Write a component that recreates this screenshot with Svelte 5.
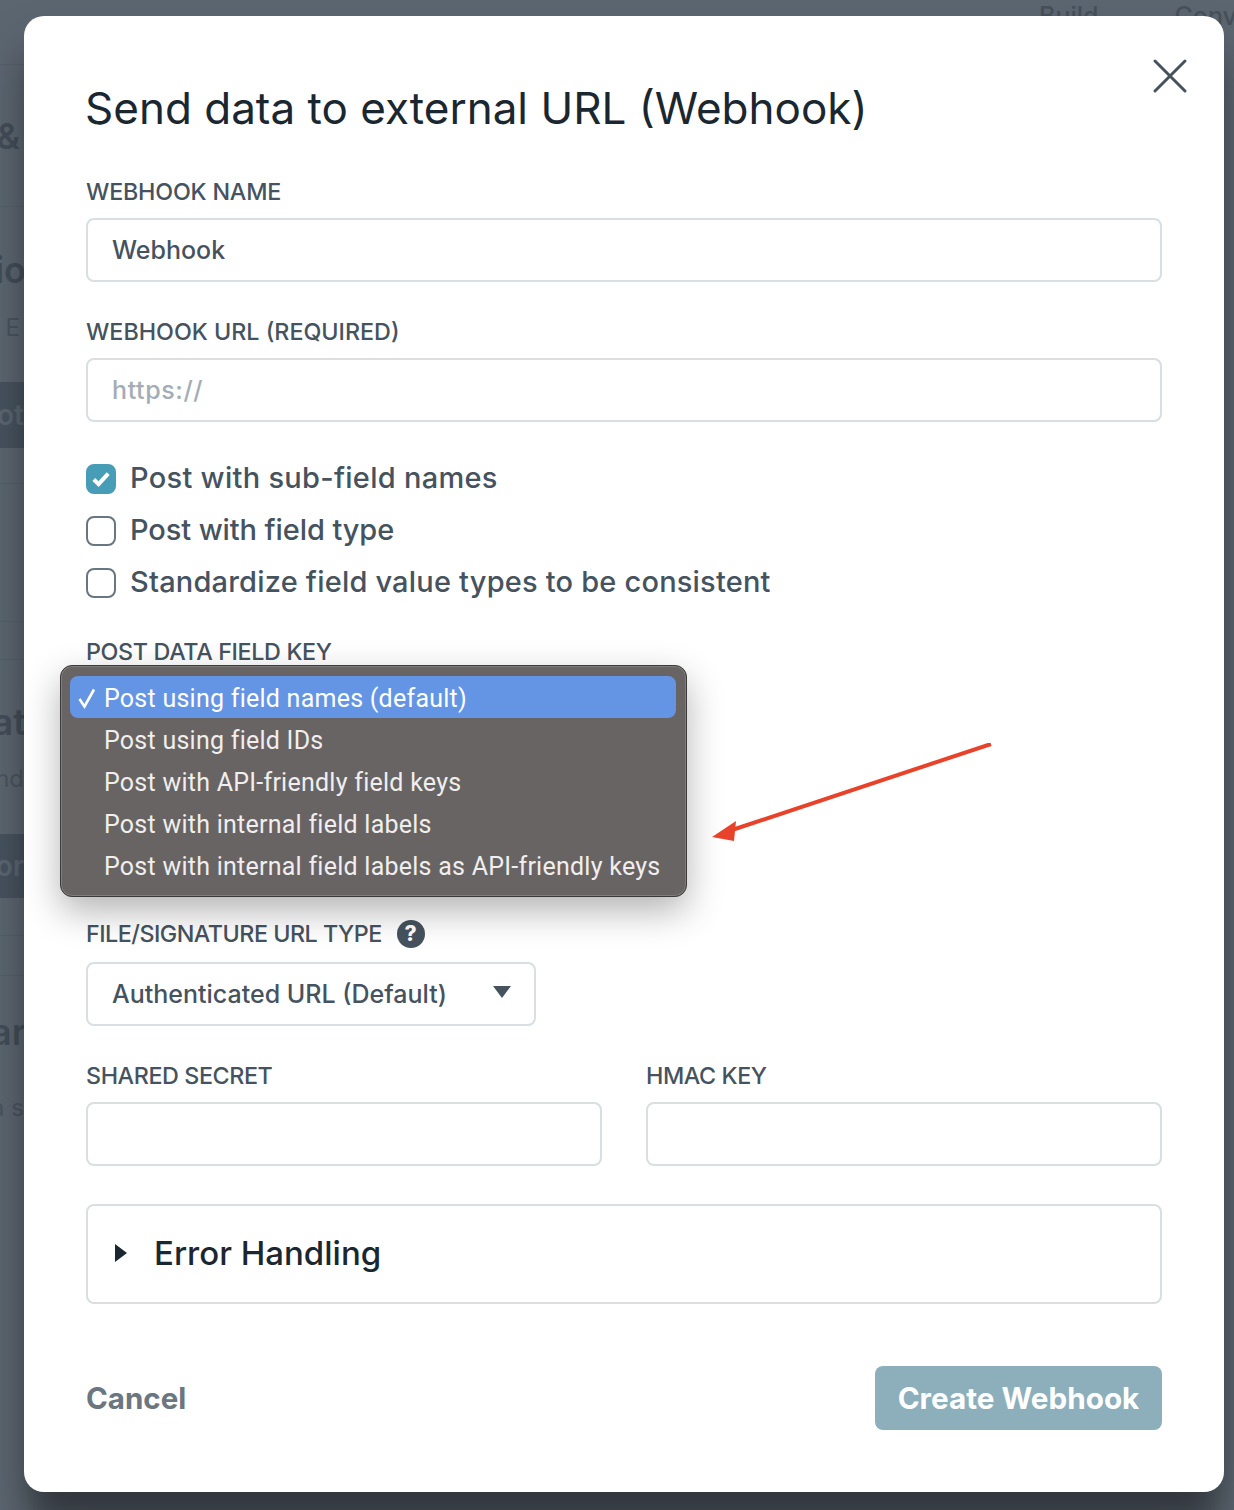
<script>
  const options = [
    'Post using field names (default)',
    'Post using field IDs',
    'Post with API-friendly field keys',
    'Post with internal field labels',
    'Post with internal field labels as API-friendly keys'
  ];
  const backdropRows = [
    { h: 65, text: '', cls: 'line' },
    { h: 142, text: '&', cls: 'big line inset' },
    { h: 33, text: '', cls: '' },
    { h: 60, text: 'io', cls: 'big' },
    { h: 54, text: 'E', cls: 'small inset' },
    { h: 28, text: '', cls: '' },
    { h: 66, text: 'ot', cls: 'band' },
    { h: 36, text: '', cls: 'line' },
    { h: 138, text: '', cls: 'line' },
    { h: 38, text: '', cls: 'line' },
    { h: 32, text: '', cls: '' },
    { h: 60, text: 'at', cls: 'big' },
    { h: 52, text: 'nd', cls: 'small' },
    { h: 30, text: '', cls: '' },
    { h: 64, text: 'or', cls: 'band' },
    { h: 38, text: '', cls: 'line' },
    { h: 40, text: '', cls: 'line' },
    { h: 26, text: '', cls: '' },
    { h: 60, text: 'ar', cls: 'big' },
    { h: 18, text: '', cls: '' },
    { h: 54, text: 'a s', cls: 'small' }
  ];
</script>

<div class="page">
  <div class="backdrop">
    <div class="rows">
      {#each backdropRows as r}
        <div class="row {r.cls}" style="height:{r.h}px"><span>{r.text}</span></div>
      {/each}
    </div>
    <div class="topnav"><span>Build</span><span>Conv</span></div>
  </div>

  <div class="modal">
    <button class="close" aria-label="Close">
      <svg width="36" height="36" viewBox="0 0 36 36"><path d="M3 3 L33 33 M33 3 L3 33" stroke="#46535e" stroke-width="3" stroke-linecap="round" fill="none"/></svg>
    </button>

    <h1>Send data to external URL (Webhook)</h1>

    <div class="field first">
      <span class="label">WEBHOOK NAME</span>
      <div class="input">Webhook</div>
    </div>
    <div class="field url">
      <span class="label">WEBHOOK URL (REQUIRED)</span>
      <div class="input placeholder">https://</div>
    </div>

    <div class="checks">
      <div class="check sub">
        <span class="box on">
          <svg width="20" height="20" viewBox="0 0 20 20"><path d="M2.8 10.5 L7.6 15.2 L17.2 4.6" stroke="#fff" stroke-width="4" fill="none"/></svg>
        </span>
        Post with sub-field names
      </div>
      <div class="check type"><span class="box"></span>Post with field type</div>
      <div class="check"><span class="box"></span>Standardize field value types to be consistent</div>
    </div>

    <div class="field key">
      <span class="label">POST DATA FIELD KEY</span>
      <div class="input narrow"></div>
    </div>

    <div class="field file">
      <span class="label">FILE/SIGNATURE URL TYPE<span class="help">?</span></span>
      <div class="input narrow select">
        Authenticated URL (Default)
        <svg class="caret" width="20" height="14" viewBox="0 0 20 14"><path d="M1 1 H19 L10 13 Z" fill="#46535e"/></svg>
      </div>
    </div>

    <div class="pair">
      <div class="field"><span class="label">SHARED SECRET</span><div class="input"></div></div>
      <div class="field"><span class="label">HMAC KEY</span><div class="input"></div></div>
    </div>

    <div class="details">
      <svg width="14" height="18" viewBox="0 0 14 18"><path d="M1 0 L13 9 L1 18 Z" fill="#1b2730"/></svg>
      <span>Error Handling</span>
    </div>

    <div class="actions">
      <span class="cancel">Cancel</span>
      <span class="submit">Create Webhook</span>
    </div>

    <div class="popup">
      {#each options as o, i}
        <div class="opt" class:sel={i === 0}>
          <span class="tick">
            {#if i === 0}
              <svg width="20" height="22" viewBox="0 0 20 22"><path d="M2.5 12 L7.5 19.5 L17 2.5" stroke="#fff" stroke-width="2.6" fill="none"/></svg>
            {/if}
          </span>{o}
        </div>
      {/each}
    </div>

    <svg class="arrow" width="300" height="110" viewBox="0 0 300 110">
      <path d="M279 1 L20 87" stroke="#e8432a" stroke-width="4" fill="none"/>
      <path d="M0 94 L24 78 L22 98 Z" fill="#e8432a"/>
    </svg>
  </div>
</div>

<style>
  :global(body) { margin: 0; background: #5c6670; }
  .page {
    position: relative;
    width: 1234px;
    height: 1510px;
    overflow: hidden;
    background: #5c6670;
    font-family: Inter, "Liberation Sans", sans-serif;
    color: #46535e;
    box-sizing: border-box;
    padding: 16px 10px 18px 24px;
  }
  .backdrop { position: absolute; inset: 0; }
  .rows { width: 24px; display: flex; flex-direction: column; }
  .row { display: flex; flex: none; justify-content: flex-end; align-items: center; box-sizing: border-box; white-space: nowrap; color: #434e59; font-weight: 600; }
  .row.line { border-bottom: 1px solid #56606a; }
  .row.big { font-size: 36px; }
  .row.big:not(.inset) span { margin-right: -2px; }
  .row.small { font-size: 24px; font-weight: 400; color: #4a555f; }
  .row.inset { padding-right: 4px; }
  .row.band { background: #47535f; color: #5b6671; font-size: 28px; }
  .topnav { position: absolute; top: 1px; right: -10px; display: flex; gap: 76px; font-size: 25px; font-weight: 500; color: #46505a; width: 205px; }

  .modal {
    position: relative;
    box-sizing: border-box;
    height: 1476px;
    background: #fff;
    border-radius: 20px;
    padding: 61px 62px 0;
    box-shadow: 0 40px 30px -8px rgba(0, 0, 0, 0.29), 0 30px 48px rgba(0, 0, 0, 0.25);
  }
  .close { position: absolute; top: 42px; right: 36px; width: 36px; height: 36px; padding: 0; border: 0; background: none; display: block; }
  .close svg { display: block; }

  h1 { margin: 0 0 0 -1px; font-size: 44px; line-height: 62px; font-weight: 400; color: #1b2730; white-space: nowrap; }

  .field { display: flex; flex-direction: column; }
  .label { box-sizing: border-box; padding-bottom: 2px; font-size: 23.3px; line-height: 34px; height: 36px; font-weight: 500; color: #46535e; display: flex; align-items: center; white-space: pre; letter-spacing: -0.2px; }
  .first { margin-top: 36px; }
  .first .input { margin-top: 7px; }
  .url { margin-top: 32px; }
  .url .label { padding-bottom: 0; letter-spacing: 0; }
  .key .label { padding-bottom: 0; letter-spacing: -0.35px; }
  .file .label { letter-spacing: -0.5px; }
  .pair .label { padding-bottom: 0; letter-spacing: -0.4px; }
  .input {
    box-sizing: border-box;
    height: 64px;
    margin-top: 8px;
    border: 2px solid #d8dee2;
    border-radius: 8px;
    padding: 0 24px;
    display: flex;
    align-items: center;
    font-size: 25px;
    font-weight: 500;
    color: #46535e;
  }
  .placeholder { color: #a3adb5; letter-spacing: 0.6px; }
  .narrow { width: 450px; }
  .select { position: relative; white-space: nowrap; }
  .caret { position: absolute; right: 22px; top: 21px; }

  .checks { margin-top: 36px; display: flex; flex-direction: column; gap: 14px; }
  .check { display: flex; align-items: center; gap: 14px; height: 38px; font-size: 29px; font-weight: 500; color: #46535e; letter-spacing: 0.2px; white-space: nowrap; }
  .check.sub { letter-spacing: 0.28px; }
  .check.type { letter-spacing: -0.1px; }
  .box { box-sizing: border-box; width: 30px; height: 30px; flex: none; margin-top: 4px; border: 2px solid #69757f; border-radius: 8px; display: flex; align-items: center; justify-content: center; }
  .box.on { background: #479db5; border-color: #479db5; }

  .key { margin-top: 34px; }
  .file { margin-top: 175px; }
  .file .input { margin-top: 9px; }
  .help { margin-left: 15px; width: 28px; height: 28px; border-radius: 50%; background: #46535e; color: #fff; display: inline-flex; align-items: center; justify-content: center; font-size: 21px; font-weight: 800; letter-spacing: 0; }

  .pair { margin-top: 32px; display: grid; grid-template-columns: 516px 516px; column-gap: 44px; }

  .details {
    box-sizing: border-box;
    margin-top: 38px;
    height: 100px;
    border: 2px solid #d8dee2;
    border-radius: 8px;
    padding: 0 26px 2px;
    display: flex;
    align-items: center;
    gap: 26px;
    font-size: 33px;
    font-weight: 500;
    color: #1b2730;
  }

  .actions { margin-top: 62px; display: flex; justify-content: space-between; align-items: center; }
  .cancel { font-size: 29.5px; font-weight: 700; color: #6b7680; }
  .submit { box-sizing: border-box; width: 287px; height: 64px; border-radius: 8px; background: #8cafbb; color: #fff; font-size: 29.7px; font-weight: 700; display: flex; align-items: center; justify-content: center; white-space: nowrap; }

  .popup {
    position: absolute;
    left: 36px;
    top: 649px;
    box-sizing: border-box;
    width: 627px;
    height: 232px;
    padding: 10px 10px 10px 9px;
    background: #686463;
    border: 1px solid #3a3a3a;
    border-radius: 12px;
    box-shadow: inset 0 0 0 1px #817d7c, 0 14px 36px rgba(0, 0, 0, 0.3);
    font-family: Roboto, Inter, sans-serif;
    font-size: 25px;
    color: #f0eeee;
  }
  .opt { box-sizing: border-box; height: 42px; padding-top: 2px; display: flex; align-items: center; border-radius: 8px; white-space: nowrap; letter-spacing: 0.25px; }
  .opt.sel { background: #6495e4; color: #fff; }
  .tick { width: 34px; flex: none; display: flex; align-items: center; padding-left: 7px; box-sizing: border-box; }
  .arrow { position: absolute; left: 688px; top: 727px; }
</style>
